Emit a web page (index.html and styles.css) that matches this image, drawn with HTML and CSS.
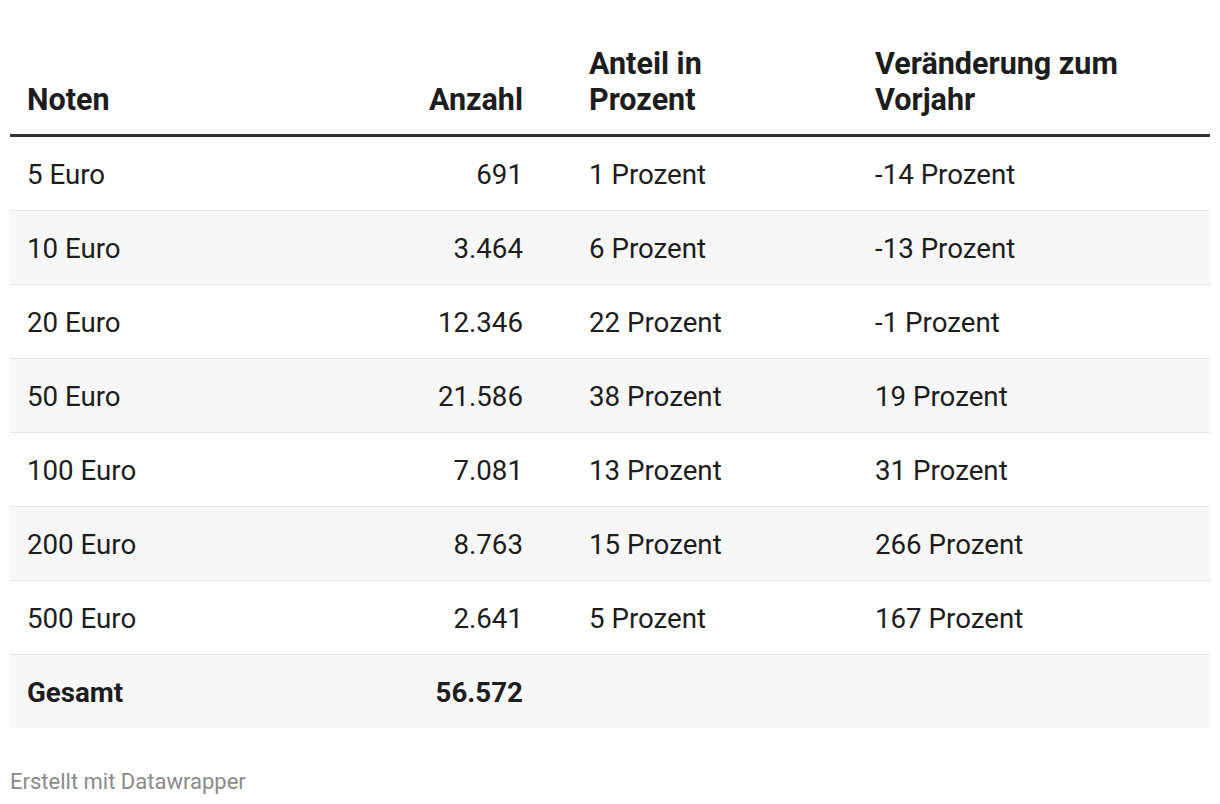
FILE: index.html
```html
<!DOCTYPE html>
<html lang="de">
<head>
<meta charset="utf-8">
<title>Banknoten</title>
<link rel="stylesheet" href="styles.css">
</head>
<body>
<div class="chart">
  <table class="tbl">
    <colgroup>
      <col class="c1"><col class="c2"><col class="c3"><col class="c4">
    </colgroup>
    <thead>
      <tr>
        <th class="left">Noten</th>
        <th class="num">Anzahl</th>
        <th class="left pad3">Anteil in<br>Prozent</th>
        <th class="left">Veränderung zum<br>Vorjahr</th>
      </tr>
    </thead>
    <tbody>
      <tr><td>5 Euro</td><td class="num">691</td><td class="pad3">1 Prozent</td><td>-14 Prozent</td></tr>
      <tr class="alt"><td>10 Euro</td><td class="num">3.464</td><td class="pad3">6 Prozent</td><td>-13 Prozent</td></tr>
      <tr><td>20 Euro</td><td class="num">12.346</td><td class="pad3">22 Prozent</td><td>-1 Prozent</td></tr>
      <tr class="alt"><td>50 Euro</td><td class="num">21.586</td><td class="pad3">38 Prozent</td><td>19 Prozent</td></tr>
      <tr><td>100 Euro</td><td class="num">7.081</td><td class="pad3">13 Prozent</td><td>31 Prozent</td></tr>
      <tr class="alt"><td>200 Euro</td><td class="num">8.763</td><td class="pad3">15 Prozent</td><td>266 Prozent</td></tr>
      <tr><td>500 Euro</td><td class="num">2.641</td><td class="pad3">5 Prozent</td><td>167 Prozent</td></tr>
      <tr class="alt total"><td>Gesamt</td><td class="num">56.572</td><td class="pad3"></td><td></td></tr>
    </tbody>
  </table>
  <div class="footer">Erstellt mit Datawrapper</div>
</div>
</body>
</html>
```
FILE: styles.css
```css
html, body {
  margin: 0;
  padding: 0;
  background: #ffffff;
}
body {
  font-family: Roboto, "Liberation Sans", Arial, sans-serif;
  color: #1d1d1d;
}
.chart {
  padding: 28px 10px 0 10px;
}
.tbl {
  width: 1200px;
  border-collapse: collapse;
  table-layout: fixed;
}
.c1 { width: 290px; }
.c2 { width: 256px; }
.c3 { width: 302px; }
.c4 { width: 352px; }
.tbl th {
  font-size: 30.5px;
  font-weight: 700;
  line-height: 36px;
  text-align: left;
  vertical-align: bottom;
  padding: 18px 17px 16px 17px;
  border-bottom: 3px solid #333333;
  color: #1d1d1d;
}
.tbl td {
  font-size: 27.7px;
  font-weight: 400;
  line-height: 35px;
  padding: 20px 17px 18px 17px;
  border-bottom: 1px solid #e5e5e5;
  color: #1d1d1d;
  white-space: nowrap;
}
.tbl .num {
  text-align: right;
  padding-right: 33px;
}
.tbl .pad3 {
  padding-left: 33px;
}
.tbl tr.alt td {
  background: #f7f7f7;
}
.tbl tr.total td {
  font-weight: 700;
  border-bottom: none;
}
.footer {
  margin-top: 40px;
  font-size: 22px;
  line-height: 28px;
  color: #8a8a8a;
}
```
